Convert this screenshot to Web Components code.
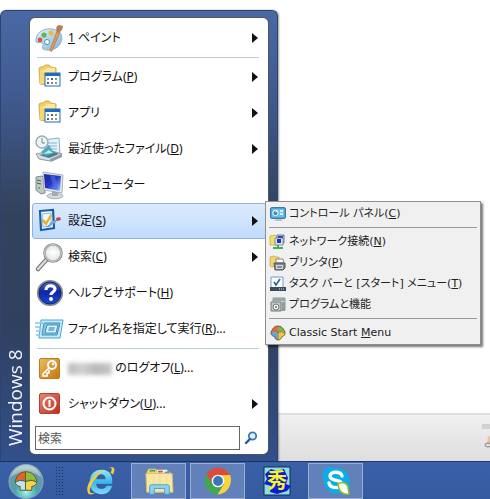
<!DOCTYPE html>
<html lang="ja">
<head>
<meta charset="utf-8">
<title>Classic Start Menu</title>
<style>
html,body{margin:0;height:100%;overflow:hidden}
body{font:12px/20px "Noto Sans","Noto Sans CJK JP",sans-serif;font-feature-settings:"palt";color:#111}
</style>
</head>
<body>
<desk-top>
  <page-footer slot="work"></page-footer>
  <start-menu slot="work" label="Windows 8">
    <menu-item icon="paint" more><u>1</u> ペイント</menu-item>
    <menu-rule></menu-rule>
    <menu-item icon="programs" more>プログラム(<u>P</u>)</menu-item>
    <menu-item icon="programs" more>アプリ</menu-item>
    <menu-item icon="recent" more>最近使ったファイル(<u>D</u>)</menu-item>
    <menu-item icon="computer">コンピューター</menu-item>
    <menu-item icon="settings" more active>設定(<u>S</u>)
      <sub-menu slot="sub">
        <sub-item icon="panel">コントロール パネル(<u>C</u>)</sub-item>
        <sub-rule></sub-rule>
        <sub-item icon="network">ネットワーク接続(<u>N</u>)</sub-item>
        <sub-item icon="printer">プリンタ(<u>P</u>)</sub-item>
        <sub-item icon="taskset">タスク バーと [スタート] メニュー(<u>T</u>)</sub-item>
        <sub-item icon="features">プログラムと機能</sub-item>
        <sub-rule></sub-rule>
        <sub-item icon="classic">Classic Start <u>M</u>enu</sub-item>
      </sub-menu>
    </menu-item>
    <menu-item icon="search" more>検索(<u>C</u>)</menu-item>
    <menu-item icon="help">ヘルプとサポート(<u>H</u>)</menu-item>
    <menu-item icon="run">ファイル名を指定して実行(<u>R</u>)...</menu-item>
    <menu-rule></menu-rule>
    <menu-item icon="key"><hidden-name></hidden-name> のログオフ(<u>L</u>)...</menu-item>
    <menu-item icon="power" more>シャットダウン(<u>U</u>)...</menu-item>
    <search-box slot="foot"></search-box>
  </start-menu>
  <task-bar slot="bar">
    <task-button icon="orb" label="スタート" round></task-button>
    <task-grip></task-grip>
    <task-button icon="ie" label="Internet Explorer"></task-button>
    <task-button icon="folder" label="エクスプローラー" open></task-button>
    <task-button icon="chrome" label="Google Chrome" open></task-button>
    <task-button icon="hide" label="秀丸エディタ"></task-button>
    <task-button icon="skype" label="Skype" open></task-button>
  </task-bar>
</desk-top>
<script>
const flag = `<path d="M2 15C6 3 12 2 15 2v12C10 12 6 12 2 15z" fill="#e8662f"/><path d="M17 2c5 0 11 3 13 13-4-3-8-3-13-1z" fill="#83b93b"/><path d="M2 17c4-3 8-3 13-1v14c-3-1-5-2-6-7-3-1-6-2-7-6z" fill="#59a9d8"/><path d="M17 16c5-2 9-2 13 1-1 4-3 5-6 6-1 4-3 6-7 7z" fill="#f4c832"/>`;
const ICONS = {
paint:`<svg viewBox="0 0 28 28"><defs><linearGradient id="a" x2="1" y2="1"><stop stop-color="#e6f3fa"/><stop offset="1" stop-color="#7fb4d4"/></linearGradient></defs><path d="M1 18C0 8 9 4 17 5c10 1 12 9 8 15-4 7-14 7-17 5-2-2 2-5-1-6-2-2-5 1-6-1z" fill="url(#a)" stroke="#7ba9c5" stroke-width=".8"/><circle cx="5" cy="16" r="2.4" fill="#d8544c"/><circle cx="9" cy="11" r="2.6" fill="#62b65b"/><circle cx="16" cy="9" r="2.5" fill="#eebb3b"/><circle cx="12" cy="18" r="2.5" fill="#fff" stroke="#4d92bc"/><path d="M22 7l3 1-8 19c-1 1-2 0-2-1z" fill="#e19a56" stroke="#b36c36" stroke-width=".6"/><path d="M22 8c-1-2-1-4 0-6l2-1 4 1c0 3-2 5-4 7z" fill="#b97b54"/></svg>`,
programs:`<svg viewBox="0 0 28 28"><path d="M4 6q0-2 2-2h2l2-2h4l2 2 5 1v14l-9 3-7-1z" fill="#f0cf66" stroke="#c5a03e" stroke-width=".8"/><path d="M5 8l5-1 2-2h8v12l-15 4z" fill="#fbe99b"/><path d="M5 8l5 1v11l-5 1z" fill="#f5d86e"/><rect x="10" y="10" width="15" height="13" fill="#fff" stroke="#286bb5"/><path d="M10 10h15v3H10z" fill="#216bbc"/><g><path d="M12 15h2v2h-2zM20 19h2v2h-2z" fill="#64a0d3"/><path d="M16 15h2v2h-2zM12 19h2v2h-2z" fill="#45608a"/><path d="M20 15h2v2h-2z" fill="#6ca65e"/><path d="M16 19h2v2h-2z" fill="#be6e61"/></g></svg>`,
recent:`<svg viewBox="0 0 28 28"><path d="M9 5l15-2 1 17-15 1z" fill="#e8f3f7" stroke="#8bb0c4"/><path d="M12 8h10M12 11h10M12 14h10" stroke="#7eb5cf"/><path d="M1 19l16-3 10 3-12 7-11-2z" fill="#d8dee2" stroke="#8d989f"/><path d="M4 20l15-3 5 2-10 4z" fill="#3f7e96"/><path d="M6 17l8-7 5 8-8 3z" fill="#48a6cf"/><path d="M8 19l6-4 4 3z" fill="#c9edbc"/><circle cx="7" cy="7" r="6" fill="#edf4f6" stroke="#9badb9" stroke-width="1.5"/><path d="M7 3v5h3" stroke="#718a9a" fill="none"/><path d="M15 24l12-5v3l-11 5z" fill="#929da4"/></svg>`,
computer:`<svg viewBox="0 0 28 28"><defs><linearGradient id="a" x2="1" y2="1"><stop stop-color="#172790"/><stop offset=".5" stop-color="#2638c5"/><stop offset="1" stop-color="#9dc9ff"/></linearGradient></defs><path d="M1 6l6-1 3 3v14l-4 1-5-4z" fill="#bfc6c6" stroke="#818b8e"/><path d="M2 9l4 1M2 12l4 1" stroke="#4d5c61"/><circle cx="4" cy="17" r="1" fill="#51ae52"/><ellipse cx="20" cy="25" rx="8" ry="2.7" fill="#d5dbdf" stroke="#8e999e" stroke-width=".7"/><path d="M17 18l6 2v5h-6z" fill="#a3adb4"/><path d="M8 1l20 3-1 18-18-3z" fill="#e3e8eb" stroke="#8b969d" stroke-width=".7"/><path d="M9 3l17 2-1 15-15-3z" fill="url(#a)"/><path d="M15 4l5 1 3 14-4-1z" fill="#536ced" opacity=".6"/></svg>`,
settings:`<svg viewBox="0 0 28 28"><path d="M5 4l13-1 1 18-13 2z" fill="#fff" stroke="#1b60a3" stroke-width="2.2"/><path d="M7 7l9-1v13l-8 1z" fill="#eef6fc" stroke="#83b7df"/><path d="M8 13l3 4 5-9" fill="none" stroke="#e9ad24" stroke-width="2.2"/><path d="M12 20l11-8" stroke="#5c8fbd" stroke-width="1.3"/><path d="M21 11l4-1 1 3-4 1z" fill="#c64251"/><path d="M15 17l6-3" stroke="#73a9d5" stroke-width="2.4"/></svg>`,
search:`<svg viewBox="0 0 28 28"><defs><radialGradient id="a"><stop stop-color="#fff"/><stop offset="1" stop-color="#dfe4e5"/></radialGradient></defs><path d="M12 16L3 26" stroke="#777" stroke-width="4.5" stroke-linecap="round"/><path d="M12 16L3 26" stroke="#dcdcdc" stroke-width="2.3" stroke-linecap="round"/><circle cx="18" cy="10" r="8.6" fill="url(#a)" stroke="#858787" stroke-width="2.4"/><circle cx="18" cy="10" r="8.4" fill="none" stroke="#e1e1e1" stroke-width=".9"/><path d="M12 10q6-4 12 0" stroke="#fff" fill="none"/></svg>`,
help:`<svg viewBox="0 0 28 28"><defs><linearGradient id="a" x2="0" y2="1"><stop stop-color="#5876cc"/><stop offset=".45" stop-color="#1125a2"/><stop offset="1" stop-color="#164bec"/></linearGradient></defs><circle cx="15" cy="14" r="12" fill="url(#a)" stroke="#83878c" stroke-width="2.2"/><circle cx="15" cy="14" r="11" fill="none" stroke="#13266e" stroke-width="1"/><path d="M11 11c0-6 9-5 9-1 0 3-4 3-4 6" fill="none" stroke="#fff" stroke-width="3.2"/><circle cx="16" cy="20" r="2" fill="#fff"/></svg>`,
run:`<svg viewBox="0 0 28 28"><path d="M6 5h22l-3 18H4z" fill="#c8e9f8" stroke="#4da4d1"/><path d="M9 8h16l-3 12H7z" fill="#84c6e6" stroke="#3892c5"/><path d="M12 10h11l-2 8H10z" fill="#e0f4fb" stroke="#3c91be"/><path d="M14 12h6l-1 4h-6z" fill="#73b8dc"/><path d="M0 8h8M0 12h6M1 16h5M1 20h4" stroke="#86c8e8" stroke-width="1.3"/></svg>`,
key:`<svg viewBox="0 0 28 28"><defs><linearGradient id="a" x2="1" y2="1"><stop stop-color="#e9bd63"/><stop offset="1" stop-color="#c77608"/></linearGradient></defs><rect x="4.5" y="4.5" width="20" height="20" rx="1.5" fill="url(#a)" stroke="#bd7c21"/><circle cx="17" cy="11" r="4" fill="none" stroke="#fff" stroke-width="2"/><circle cx="18" cy="10" r="1.2" fill="#fff"/><path d="M14 14l-6 6v2h4v-3h2v-3" fill="none" stroke="#fff" stroke-width="1.6"/></svg>`,
power:`<svg viewBox="0 0 28 28"><defs><linearGradient id="a" x2="1" y2="1"><stop stop-color="#e58773"/><stop offset="1" stop-color="#c32b17"/></linearGradient></defs><rect x="4.5" y="3.5" width="20" height="20" rx="1.5" fill="url(#a)" stroke="#b44131"/><circle cx="14.5" cy="13.5" r="6" fill="none" stroke="#fff" stroke-width="2"/><path d="M14.5 10v7" stroke="#fff" stroke-width="2"/></svg>`,
panel:`<svg viewBox="0 0 16 16"><rect x=".5" y="1.5" width="15" height="11" rx="1.5" fill="#4ba4d8" stroke="#3d7cab"/><rect x="2" y="3" width="12" height="8" fill="#6bc2e8"/><circle cx="5.5" cy="7" r="2.6" fill="#3083bd" stroke="#fff"/><path d="M5.5 7V4.5H8z" fill="#f5f7c8"/><path d="M10 5h3M10 8h3" stroke="#fff" stroke-width="1.5"/><path d="M6 13h5l2 2H4z" fill="#b9c6cc"/></svg>`,
network:`<svg viewBox="0 0 16 16"><path d="M0 2l5-1 2 2v8H0z" fill="#f6df68" stroke="#c2a345" stroke-width=".7"/><path d="M7 1h7v8H7z" fill="#cfdaf0" stroke="#68779b"/><path d="M8 2h5v5H8z" fill="#2344b2"/><path d="M5 4h8v7H5z" fill="#dbe5f6" stroke="#68779b" stroke-width=".8"/><path d="M7 5h4v4H7z" fill="#2333b6"/><path d="M8 11v3M3 14h10" stroke="#39b653" stroke-width="2"/></svg>`,
printer:`<svg viewBox="0 0 16 16"><path d="M0 2l4-1 2 1h3v8l-7 2-2-1z" fill="#f2d573" stroke="#c4a14b" stroke-width=".7"/><path d="M6 4h7l1 4H6z" fill="#fff" stroke="#888"/><path d="M4 8h11v5l-2 2H5z" fill="#81878c" stroke="#555"/><path d="M6 10h7v4H6z" fill="#d3d9dd"/><path d="M7 12h5" stroke="#3d464e"/></svg>`,
taskset:`<svg viewBox="0 0 16 16"><path d="M1 1h12v11H1z" fill="#fafcff" stroke="#819cb2"/><path d="M4 6l2 3 4-6" fill="none" stroke="#2b67a5" stroke-width="1.7"/><path d="M0 11h16v4H0z" fill="#3c4b61"/><path d="M9 13h1m1 0h1m1 0h1" stroke="#e1e6ec"/></svg>`,
features:`<svg viewBox="0 0 16 16"><path d="M3 1h12v12H3z" fill="#d3d9d6" stroke="#909995"/><path d="M3 1h12v3H3z" fill="#9aa8a3"/><path d="M1 5h10v9H1z" fill="#c4c9c7" stroke="#767b79"/><circle cx="6" cy="10" r="3" fill="#eef2ef" stroke="#737d78"/><circle cx="6" cy="10" r="1" fill="#65796e"/><path d="M12 5h3v9h-3z" fill="#8aa393"/></svg>`,
classic:`<svg viewBox="0 0 32 32">${flag}<path d="M2 15C6 3 12 2 16 2s11 3 14 13v3c-2 4-4 5-6 5-1 4-4 7-8 7s-6-3-7-7c-3 0-6-2-7-6zM16 2v28M2 16c5-4 9-3 14-1 5-2 9-2 14 1" fill="none" stroke="#594c28" stroke-width="1.6"/></svg>`,
find:`<svg viewBox="0 0 14 14"><circle cx="8.5" cy="5" r="3.7" fill="#e4f2fd" stroke="#3479bd" stroke-width="1.8"/><path d="M6 8l-4 4" stroke="#245b9f" stroke-width="2.4" stroke-linecap="round"/></svg>`,
orb:`<svg viewBox="0 0 38 38"><defs><radialGradient id="a" cx=".5" cy=".8" r=".8"><stop stop-color="#a4f5ec"/><stop offset=".4" stop-color="#49a3aa"/><stop offset=".75" stop-color="#6d98a9"/><stop offset="1" stop-color="#c6d8df"/></radialGradient></defs><circle cx="19" cy="19" r="17.5" fill="url(#a)" stroke="#87aab9"/><path d="M4 14C7 0 31 0 34 14 26 8 12 8 4 14z" fill="#fff" opacity=".3"/><path d="M8 19c1-7 5-10 10-10v9c-4-2-7-1-10 1z" fill="#e5641f"/><path d="M19 9c5 0 10 3 11 10-3-2-7-3-11-1z" fill="#93bd34"/><path d="M8 20c3-2 6-2 10-1v9h-5v-4c-3 0-5-1-5-4z" fill="#c3e3f2"/><path d="M19 19c4-1 8-1 11 1 0 3-2 4-5 4v4h-6z" fill="#fbd04a"/><path d="M8 19c1-7 6-10 11-10s10 3 11 10c0 3-2 5-5 5v4H13v-4c-3 0-5-2-5-5zM18.500 9v19M8 20c4-3 7-2 11-1 4-1 7-2 11 1" fill="none" stroke="#5a5a2b"/></svg>`,
ie:`<svg viewBox="0 0 32 32"><defs><linearGradient id="a" x2="0" y2="1"><stop stop-color="#9beaff"/><stop offset=".5" stop-color="#35b9ed"/><stop offset="1" stop-color="#83d8f8"/></linearGradient></defs><path fill-rule="evenodd" d="M29 19H12c0 7 9 7 11 2h6c-2 7-7 9-11 9C10 30 5 25 5 17S10 4 18 4c8 0 12 6 11 15zM12 14h10c0-7-9-7-10 0z" fill="url(#a)"/><path d="M27 7c4-5 0-7-7-2 9-6 14-5 10 4M20 4C10 7 0 20 3 28c1 4 6 2 9 0-8 3-8-2-5-8 3-7 9-12 13-16z" fill="#f6cd35"/></svg>`,
folder:`<svg viewBox="0 0 32 32"><path d="M3 6l2-3h8l1 3h14v21H3z" fill="#eed273"/><path d="M14 4h11v6H14z" fill="#f8f4dd"/><path d="M6 4h6v2H6z" fill="#54a657"/><path d="M15 5h5v2h-5z" fill="#d94f3f"/><path d="M22 6h5v2h-5z" fill="#4c95cf"/><path d="M2 8h28l1 20H3z" fill="#f7e7a6" stroke="#ddbd60"/><path d="M10 10v17M17 10v17M24 10v17" stroke="#eed995"/><path d="M6 30v-8q0-2 2-2h17q2 0 2 2v8h-5v-6H11v6z" fill="#8cd2ef" stroke="#4aa0cf"/></svg>`,
chrome:`<svg viewBox="0 0 30 30"><g transform="translate(1 1)"><path d="M14 8h12l-.3-.5A13.500 13.500 0 0 0 2.300 7.300L8.500 17z" fill="#dd4b3b"/><path d="M2.300 7.300A13.500 13.500 0 0 0 13.500 27.500L19.500 17 14 20 8.500 17z" fill="#42a653"/><path d="M14 8h12c3 7-1 19-12.500 19.500L20 17z" fill="#f8d43b"/><circle cx="14" cy="14" r="6.300" fill="#fff"/><circle cx="14" cy="14" r="4.900" fill="#3b77b8"/></g></svg>`,
hide:`<svg viewBox="0 0 30 30"><path d="M2 1h26v28H2z" fill="#8cdfe0" stroke="#152c4e"/><path d="M3 8l6-5 6 2 7-2 4 9-2 6 5 2-4 5-10 3-7-2 1-6-7-2 3-5z" fill="#111bd4"/><text x="15" y="22" text-anchor="middle" font-family="Noto Sans CJK JP,sans-serif" font-size="20" font-weight="700" fill="#f8f424">秀</text></svg>`,
skype:`<svg viewBox="0 0 30 30"><path d="M9 1c3 0 4 1 6 1 8 0 14 6 13 14 3 6-2 13-9 11C10 29 2 23 3 14 0 8 3 1 9 1z" fill="#08aeea"/><path d="M21 10c-1-5-12-5-12 0 0 6 12 3 12 8 0 5-12 5-13-1" fill="none" stroke="#fff" stroke-width="3.4" stroke-linecap="round"/><path d="M17 18c5-3 9-1 10 3l1 7c-6 1-10-2-11-10z" fill="#fcfff0" stroke="#8cba38" stroke-width="1.6"/></svg>`
};
function define(name, css, html, setup){
  const t=document.createElement('template');
  t.innerHTML='<style>:host{box-sizing:border-box}*{box-sizing:border-box}'+css+'</style>'+html;
  customElements.define(name, class extends HTMLElement{
    constructor(){super();this.attachShadow({mode:'open'}).append(t.content.cloneNode(true));}
    connectedCallback(){if(setup)setup(this,this.shadowRoot);}
  });
}
define('app-icon',':host{display:block;flex:none}svg{display:block;width:100%;height:100%;overflow:visible}','',(el,r)=>{
  if(!r.querySelector('svg'))r.innerHTML+=ICONS[el.getAttribute('name')];
});
const passIcon=(el,r)=>{
  const i=document.createElement('app-icon');i.setAttribute('name',el.getAttribute('icon'));
  i.setAttribute('aria-hidden','true');r.querySelector('button').prepend(i);
  const l=el.getAttribute('label');if(l)r.querySelector('button').setAttribute('aria-label',l);
};
define('desk-top',`:host{display:grid;grid-template-rows:1fr auto;height:100vh;background:#fff}
main{position:relative;display:flex;align-items:flex-end;min-height:0}`,
`<main><slot name="work"></slot></main><slot name="bar"></slot>`);
define('page-footer',`:host{display:flex;flex:1;height:48px;justify-content:flex-end;border-top:2px solid #dedede;background:linear-gradient(#f0f0f0,#dedede)}
div{width:8px;padding-top:9px}i{display:block;height:5px;background:#d0d0d0}svg{display:block;margin-top:6px}`,
`<div><i></i><svg width="8" height="14" viewBox="0 0 8 14"><path d="M6 2l2-1v8H5z" fill="#eac2a5"/><ellipse cx="6" cy="10" rx="3" ry="2" fill="#ddd" stroke="#888"/></svg></div>`);
define('start-menu',`:host{position:absolute;left:0;bottom:0;display:grid;grid-template-columns:26px minmax(0,1fr);width:min(278px,100%);padding:7px 9px 7px 3px;
background:linear-gradient(#4a68a4,#405b91 18%,#33425c 45%,#30405f 70%,#32508c);border:1px solid #2e436f;border-width:1px 1px 0;border-radius:6px 6px 0 0;box-shadow:1px 0 2px #0006}
h1{justify-self:start;margin:0;writing-mode:vertical-rl;transform:rotate(180deg);font:19px/22px "Open Sans",sans-serif;color:#f2f5fb;padding-top:8px;text-align:start}
nav{background:#fff;border-radius:5px;padding:2px 1px 4px 2px;box-shadow:0 0 0 1px #4b5664}`,
`<h1></h1><nav><slot></slot><slot name="foot"></slot></nav>`,(el,r)=>r.querySelector('h1').textContent=el.getAttribute('label'));
define('menu-item',`:host{display:block;position:relative}
button{display:flex;align-items:center;width:100%;height:36px;padding:0 8px 0 2px;border:1px solid transparent;border-radius:3px;background:none;font:inherit;font-feature-settings:inherit;color:inherit;text-align:left;white-space:nowrap}
app-icon{width:28px;height:28px;margin-right:5px}
span{flex:1}
svg{display:none;width:6px;height:12px}
:host([more]) svg{display:block}
:host([active]) button{background:linear-gradient(#dcebfc,#c1dbfc);border-color:#8fb4e4}`,
`<button><span><slot></slot></span><svg viewBox="0 0 6 12"><path d="M0 1l6 5-6 5z" fill="#111"/></svg></button><slot name="sub"></slot>`,passIcon);
define('menu-rule',`:host{display:block;padding:1px 8px 1px 5px}i{display:block;height:1px;background:#bccbdd}`,`<i></i>`);
define('hidden-name',`:host{display:inline-block;width:44px;height:12px;vertical-align:middle;filter:blur(2px);background:linear-gradient(90deg,#bbb,#d0d0d0 30%,#b8b8b8 65%,#c8c8c8)}`,'');
define('search-box',`:host{display:flex;align-items:center;gap:4px;padding:4px 9px 0 3px}
input{flex:1;min-width:0;height:24px;padding:0 2px;border:1px solid #666;background:#fff;font:inherit;font-feature-settings:inherit;color:#333}
input::placeholder{color:#555;opacity:1}
button{width:14px;height:14px;padding:0;border:0;background:none}`,
`<input type="search" placeholder="検索" aria-label="検索"><button aria-label="検索を実行"><app-icon name="find"></app-icon></button>`);
define('sub-menu',`:host{position:absolute;z-index:2;left:calc(100% - 2px);top:-2px;display:block;width:max-content;min-width:216px;padding:1px 3px;border:1px solid #8f8f8f;background:#f0f0f0;box-shadow:2px 2px 2px #0008;font-family:"DejaVu Sans","Noto Sans CJK JP",sans-serif;font-size:11px}`,`<slot></slot>`);
define('sub-item',`:host{display:block}
button{display:flex;align-items:center;gap:3px;width:100%;height:21px;padding:0 8px 0 1px;border:0;background:none;font:inherit;font-feature-settings:inherit;color:#222;white-space:nowrap}
app-icon{width:16px;height:16px}`,`<button><span><slot></slot></span></button>`,passIcon);
define('sub-rule',`:host{display:block;padding:3px 0}i{display:block;height:1px;background:#999}`,`<i></i>`);
define('task-bar',`:host{display:flex;align-items:center;height:38px;padding-left:7px;gap:4px;background:linear-gradient(#3a60a8,#365a9f);border-top:1px solid #22386c}`,`<slot></slot>`);
define('task-grip',`:host{display:block;width:8px;height:30px;margin:0 5px 0 6px;background:radial-gradient(circle,#1c3263 1px,transparent 1px) 0 0/3px 3px}`,'');
define('task-button',`:host{display:block}
button{display:grid;place-items:center;width:55px;height:36px;padding:0;border:1px solid transparent;background:none}
app-icon{width:30px;height:30px}
:host([round]) button{width:38px;border:0}
:host([round]) app-icon{width:38px;height:37px}
:host([open]) button{background:#6280b9;border-color:#9aaed3}`,`<button></button>`,passIcon);
</script>
</body>
</html>
